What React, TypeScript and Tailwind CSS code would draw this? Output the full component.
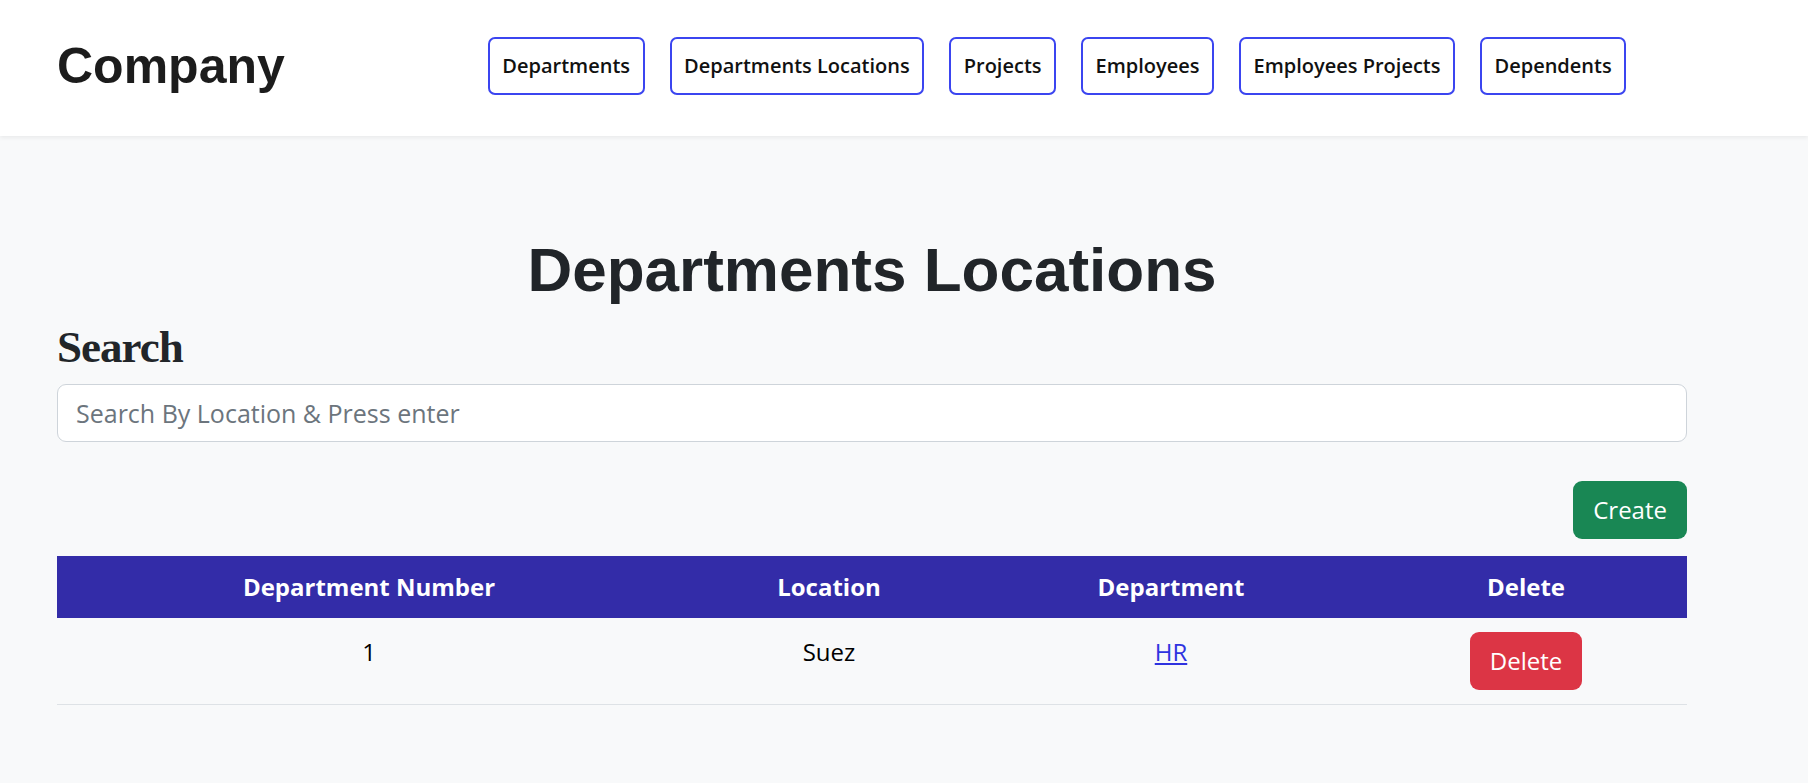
const navLinks = [
  "Departments",
  "Departments Locations",
  "Projects",
  "Employees",
  "Employees Projects",
  "Dependents",
];

const rows = [{ number: 1, location: "Suez", department: "HR" }];

function Header() {
  return (
    <header className="flex h-[136px] items-center bg-white pb-[5px] pl-[57px] shadow-[0_2px_4px_rgba(0,0,0,0.06)]">
      <a
        href="#"
        className="font-['Liberation_Sans',Arial,sans-serif] text-[50px] font-bold leading-[1.2] text-[#1c1c1c]"
      >
        Company
      </a>
      <nav className="ml-[203px] flex gap-[25px]">
        {navLinks.map((link) => (
          <a
            key={link}
            href="#"
            className="flex h-[58px] items-center rounded-[7px] border-2 border-[#3b45f0] px-[12.5px] text-[20px] font-semibold text-[#111]"
          >
            {link}
          </a>
        ))}
      </nav>
    </header>
  );
}

function LocationsTable() {
  return (
    <table className="mt-[17px] w-full border-collapse text-[24px]">
      <thead>
        <tr className="bg-[#332ca8] text-white">
          <th className="w-[624px] py-[12px] font-bold leading-[38px]">Department Number</th>
          <th className="w-[296px] py-[12px] font-bold leading-[38px]">Location</th>
          <th className="w-[388px] py-[12px] font-bold leading-[38px]">Department</th>
          <th className="py-[12px] font-bold leading-[38px]">Delete</th>
        </tr>
      </thead>
      <tbody>
        {rows.map((row) => (
          <tr key={row.number} className="border-b border-[#dee2e6] text-black">
            <td className="pt-[14px] pb-[14px] text-center align-top leading-[40px]">{row.number}</td>
            <td className="pt-[14px] pb-[14px] text-center align-top leading-[40px]">{row.location}</td>
            <td className="pt-[14px] pb-[14px] text-center align-top leading-[40px]">
              <a href="#" className="text-[#2f33e0] underline">
                {row.department}
              </a>
            </td>
            <td className="pt-[14px] pb-[14px] text-center align-top">
              <button className="h-[58px] rounded-[9px] bg-[#dc3545] px-[20px] text-[24px] text-white">
                Delete
              </button>
            </td>
          </tr>
        ))}
      </tbody>
    </table>
  );
}

export default function App() {
  return (
    <div className="min-h-[783px] bg-[#f8f9fa] font-['Open_Sans',sans-serif]">
      <Header />
      <main className="ml-[57px] w-[1630px] pt-[97px]">
        <h1 className="text-center font-['Liberation_Sans',Arial,sans-serif] text-[62px] font-bold leading-[1.2] text-[#212529]">
          Departments Locations
        </h1>
        <h2 className="mt-[13px] font-['Liberation_Serif','Times_New_Roman',serif] text-[45px] font-bold leading-[54px] tracking-[-1px] text-[#212529]">
          Search
        </h2>
        <input
          type="text"
          placeholder="Search By Location & Press enter"
          className="mt-[10px] block h-[58px] w-full rounded-[9px] border-[1.5px] border-[#ced4da] bg-white px-[18px] text-[25px] text-[#212529] placeholder:text-[#6c757d] outline-none"
        />
        <div className="mt-[39px] flex justify-end">
          <button className="h-[58px] rounded-[9px] bg-[#198754] px-[20px] text-[24px] text-white">
            Create
          </button>
        </div>
        <LocationsTable />
      </main>
    </div>
  );
}
